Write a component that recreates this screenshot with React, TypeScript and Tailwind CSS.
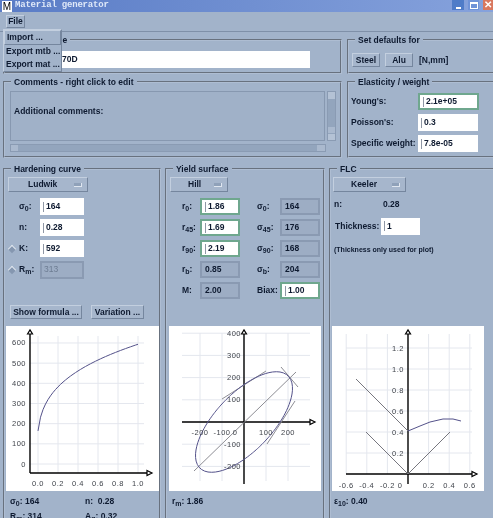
import type { ReactNode } from "react";

const raised = "border border-t-[#c3cfdf] border-l-[#c3cfdf] border-b-[#75869e] border-r-[#75869e]";

function Frame({ title, className, legendClass, children }: { title: string; className: string; legendClass?: string; children: ReactNode }) {
  return (
    <fieldset className={`shrink-0 border-2 [border-style:groove] border-[#aebdd2] ${className}`}>
      <legend className={`px-[3px] text-[8.5px] leading-[12px] ${legendClass ?? "ml-[6px]"}`}>{title}</legend>
      {children}
    </fieldset>
  );
}

function Button({ children, className }: { children: ReactNode; className: string }) {
  return <div className={`flex h-[14px] shrink-0 items-center justify-center whitespace-nowrap bg-[#a6b6cc] text-[8.5px] ${raised} ${className}`}>{children}</div>;
}

function Dropdown({ label, className, textClass }: { label: string; className: string; textClass: string }) {
  return (
    <div className={`flex h-[15px] items-center bg-[#a6b6cc] text-[8.5px] ${raised} ${className}`}>
      <span className={textClass}>{label}</span>
      <span className="ml-auto mr-[5px] h-[4px] w-[8px] border-b border-r border-[#dfe6ef] bg-[#8fa1b9]" />
    </div>
  );
}

// type = white input, green = edited input, off = read only
function Field({ value, type = "white", width = "w-[44px]" }: { value: string; type?: "white" | "green" | "off"; width?: string }) {
  const look =
    type === "white"
      ? "bg-white"
      : type === "green"
        ? "border-2 border-[#6fa78e] bg-white"
        : "border-2 border-[#8a9ab2] bg-[#9dadc4]";
  return (
    <div className={`flex h-[17px] shrink-0 items-center pl-[3px] text-[8.5px] ${width} ${look}`}>
      {type !== "off" && <span className="mr-px h-[10px] w-[2px] shrink-0 border-l border-[#8f97a5]" />}
      {value}
    </div>
  );
}

function Sym({ base, sub }: { base: string; sub: string }) {
  return (
    <span className="whitespace-nowrap">
      {base}
      <sub className="text-[7px] font-bold">{sub}</sub>:
    </span>
  );
}

function Row({ label, labelClass, children, radio }: { label: ReactNode; labelClass: string; children: ReactNode; radio?: boolean }) {
  return (
    <div className="flex h-[17px] items-center">
      <div className={`relative flex shrink-0 items-center ${labelClass}`}>
        {radio && <span className="absolute left-[4px] h-[6px] w-[6px] rotate-45 border-t border-l border-[#e3e9f1] bg-[#8597b0]" />}
        {label}
      </div>
      {children}
    </div>
  );
}

const line = "#e4e7ee";

function Grid({ xs, ys, x0, x1, y0, y1 }: { xs: number[]; ys: number[]; x0: number; x1: number; y0: number; y1: number }) {
  return (
    <g stroke={line} strokeWidth="1">
      {xs.map((x) => <line key={`x${x}`} x1={x} x2={x} y1={y0} y2={y1} />)}
      {ys.map((y) => <line key={`y${y}`} x1={x0} x2={x1} y1={y} y2={y} />)}
    </g>
  );
}

function Axes({ ox, oy, x0, x1, y0, y1 }: { ox: number; oy: number; x0: number; x1: number; y0: number; y1: number }) {
  return (
    <g stroke="#000" fill="none">
      <line x1={x0} x2={x1} y1={oy} y2={oy} strokeWidth="1.4" />
      <line x1={ox} x2={ox} y1={y0} y2={y1} strokeWidth="1.4" />
      <path d={`M${ox - 2.5} ${y0 + 1}L${ox} ${y0 - 3}L${ox + 2.5} ${y0 + 1}Z`} strokeWidth="1.2" fill="#fff" />
      <path d={`M${x1} ${oy - 2.5}L${x1 + 5} ${oy}L${x1} ${oy + 2.5}Z`} strokeWidth="1.2" fill="#fff" />
    </g>
  );
}

function Label({ x, y, children, end }: { x: number; y: number; children: string; end?: boolean }) {
  return (
    <text x={x} y={y} textAnchor={end ? "end" : "middle"} fontSize="7.5" fontWeight="400" letterSpacing="0.5" fill="#3f434a" fontFamily="Liberation Sans, sans-serif">
      {children}
    </text>
  );
}

function HardeningPlot() {
  const pts = Array.from({ length: 41 }, (_, i) => {
    const e = i / 40;
    const s = 592 * Math.pow(0.0102 + e, 0.28);
    return `${32 + e * 100},${138 - s * 0.2017}`;
  }).join(" ");
  const ticksX = [0, 0.2, 0.4, 0.6, 0.8, 1];
  const ticksY = [0, 100, 200, 300, 400, 500, 600];
  return (
    <svg width="153" height="165" className="block bg-white">
      <Grid xs={ticksX.map((v) => 32 + v * 100)} ys={ticksY.map((v) => 138 - v * 0.2017)} x0={24} x1={138} y0={10} y1={147} />
      <Axes ox={24} oy={147} x0={24} x1={141} y0={7} y1={147} />
      <polyline points={pts} fill="none" stroke="#54528a" strokeWidth="1" />
      {ticksX.map((v) => <Label key={v} x={32 + v * 100} y={160}>{v.toFixed(1)}</Label>)}
      {ticksY.map((v) => <Label key={v} x={20} y={140.5 - v * 0.2017} end>{String(v)}</Label>)}
    </svg>
  );
}

function YieldPlot() {
  const ox = 75;
  const oy = 96;
  const pts = Array.from({ length: 121 }, (_, i) => {
    const t = (i / 120) * Math.PI * 2;
    const c = Math.cos(t);
    const n = Math.sin(t);
    const r = 164 / Math.sqrt(c * c - 1.3007 * c * n + 0.9473 * n * n);
    return `${ox + r * c * 0.22},${oy - r * n * 0.222}`;
  }).join(" ");
  const ticksX = [-200, -100, 100, 200];
  const ticksY = [-200, -100, 100, 200, 300, 400];
  return (
    <svg width="152" height="165" className="block bg-white">
      <Grid xs={[...ticksX, 0].map((v) => ox + v * 0.22)} ys={[...ticksY, 0].map((v) => oy - v * 0.222)} x0={13} x1={141} y0={7} y1={155} />
      <Axes ox={ox} oy={oy} x0={13} x1={141} y0={7} y1={158} />
      <line x1={25} y1={145} x2={127} y2={46} stroke="#8d8d94" />
      <g stroke="#8d8d94" fill="none">
        <line x1={98} y1={118} x2={126} y2={75} />
        <line x1={53} y1={73} x2={97} y2={45} />
        <line x1={112} y1={41} x2={129} y2={61} />
      </g>
      <polyline points={pts} fill="none" stroke="#54528a" strokeWidth="1" />
      {ticksX.map((v) => <Label key={v} x={ox + v * 0.22} y={109}>{String(v)}</Label>)}
      <Label x={66} y={109}>0</Label>
      {ticksY.map((v) => <Label key={v} x={72} y={oy + 2.5 - v * 0.222} end>{String(v)}</Label>)}
    </svg>
  );
}

function FlcPlot() {
  const ox = 76;
  const oy = 148;
  const ticksX = [-0.6, -0.4, -0.2, 0.2, 0.4, 0.6];
  const ticksY = [0.2, 0.4, 0.6, 0.8, 1, 1.2];
  const toX = (v: number) => ox + v * 103;
  const toY = (v: number) => oy - v * 105;
  return (
    <svg width="152" height="165" className="block bg-white">
      <Grid xs={ticksX.map(toX)} ys={ticksY.map(toY)} x0={14} x1={140} y0={8} y1={148} />
      <Axes ox={ox} oy={oy} x0={14} x1={140} y0={7} y1={158} />
      <polyline points="24,53 76,105" fill="none" stroke="#77777f" />
      <polyline points="34,106 76,148 118,106" fill="none" stroke="#77777f" />
      <polyline points="76,105 88,100 98,96 111,93 121,93 129,95" fill="none" stroke="#54528a" />
      {ticksX.map((v) => <Label key={v} x={toX(v)} y={162}>{v.toFixed(1)}</Label>)}
      <Label x={68} y={162}>0</Label>
      {ticksY.map((v) => <Label key={v} x={72} y={toY(v) + 2.5} end>{v.toFixed(1)}</Label>)}
    </svg>
  );
}

export default function App() {
  const left = "w-[33px] pl-[15px]";
  const right = "w-[40px] pl-[17px]";
  return (
    <div className="relative h-[518px] w-[493px] overflow-hidden bg-[#a2b3ca] font-['Liberation_Sans',sans-serif] font-bold text-[#0e1a30] blur-[0.3px]">
      {/* Title bar */}
      <div className="flex h-[12px] items-center bg-gradient-to-r from-[#5a7cc6] to-[#86a2dc]">
        <div className="ml-[2px] flex h-[11px] w-[10px] items-center justify-center bg-white text-[10px] font-normal text-black">M</div>
        <span className="ml-[3px] font-['Liberation_Mono'] text-[9px] tracking-[-0.2px] text-[#dfe8f8]">Material generator</span>
        <div className="ml-auto flex h-full items-start gap-[4px]">
          <div className="flex h-[10px] w-[12px] items-end justify-center bg-[#4f7cc8] pb-px">
            <span className="h-[2px] w-[5px] bg-white" />
          </div>
          <div className="flex h-[10px] w-[11px] items-center justify-center bg-[#6f93d8]">
            <span className="h-[7px] w-[8px] border border-t-2 border-white" />
          </div>
          <div className="flex h-[10px] w-[10px] items-center justify-center bg-[#d9785f] text-[10px] leading-none text-white">✕</div>
        </div>
      </div>

      {/* Menu bar */}
      <div className="flex h-[20px] items-center border-b border-[#7f90a8] pl-[6px]">
        <div className={`flex h-[13px] w-[19px] items-center justify-center text-[8.5px] ${raised}`}>File</div>
      </div>

      {/* File menu */}
      <div className={`absolute left-[3px] top-[29px] z-10 flex w-[59px] flex-col whitespace-nowrap bg-[#a2b3ca] text-[8.5px] leading-[13px] ${raised}`}>
        <div className={`pl-[2px] ${raised}`}>Import ...</div>
        <div className="pl-[2px]">Export mtb ...</div>
        <div className="pl-[2px]">Export mat ...</div>
      </div>

      <div className="flex flex-col gap-[2px] pl-[3px] pt-[2px]">
        <div className="flex gap-[5px]">
          <Frame title="Name" className="h-[40px] w-[339px]" legendClass="ml-[36px]">
            <div className="ml-[5px] mr-[30px] mt-[5px] flex h-[17px] items-center bg-white pl-[52px] text-[8.5px]">70D</div>
          </Frame>
          <Frame title="Set defaults for" className="h-[40px] w-[160px]">
            <div className="mt-[7px] flex items-center gap-[5px] pl-[3px]">
              <Button className="w-[28px]">Steel</Button>
              <Button className="w-[28px]">Alu</Button>
              <span className="ml-[1px] text-[8.5px]">[N,mm]</span>
            </div>
          </Frame>
        </div>

        <div className="flex gap-[5px]">
          <Frame title="Comments - right click to edit" className="h-[82px] w-[339px]">
            <div className="flex h-[53px] gap-[2px] pl-[5px] pt-[3px]">
              <div className="w-[315px] border border-[#8798b0] bg-[#a0b1c8] pl-[3px] pt-[13px] text-[8.5px]">Additional comments:</div>
              <div className="flex w-[9px] flex-col border border-[#8a9bb3] bg-[#93a5bd]">
                <span className="h-[7px] bg-[#b4c2d5]" />
                <span className="mt-auto h-[6px] bg-[#aab9ce]" />
                <span className="mt-px h-[6px] bg-[#b4c2d5]" />
              </div>
            </div>
            <div className="ml-[5px] mt-[3px] flex h-[8px] w-[316px] justify-between border border-[#8a9bb3] bg-[#93a5bd]">
              <span className="h-full w-[7px] bg-[#aab9ce]" />
              <span className="h-full w-[8px] bg-[#aab9ce]" />
            </div>
          </Frame>
          <Frame title="Elasticity / weight" className="h-[82px] w-[160px]">
            <div className="mt-[5px] flex flex-col gap-[4px] pl-[2px] text-[8.5px]">
              <Row label="Young's:" labelClass="w-[67px]"><Field value="2.1e+05" type="green" width="w-[61px]" /></Row>
              <Row label="Poisson's:" labelClass="w-[67px]"><Field value="0.3" width="w-[60px]" /></Row>
              <Row label="Specific weight:" labelClass="w-[67px] whitespace-nowrap"><Field value="7.8e-05" width="w-[60px]" /></Row>
            </div>
          </Frame>
        </div>

        <div className="mt-[3px] flex gap-[4px]">
          <Frame title="Hardening curve" className="h-[370px] w-[158px]">
            <Dropdown label="Ludwik" className="ml-[3px] mt-[2px] w-[80px]" textClass="ml-[19px]" />
            <div className="mt-[6px] flex flex-col gap-[4px] text-[8.5px]">
              <Row label={<Sym base="σ" sub="0" />} labelClass="w-[35px] pl-[14px]"><Field value="164" /></Row>
              <Row label="n:" labelClass="w-[35px] pl-[14px]"><Field value="0.28" /></Row>
              <Row label="K:" labelClass="w-[35px] pl-[14px]" radio><Field value="592" /></Row>
              <Row label={<Sym base="R" sub="m" />} labelClass="w-[35px] pl-[14px]" radio>
                <div className="flex h-[18px] w-[44px] items-center border-2 border-[#8a9ab2] bg-[#9dadc4] pl-[2px] font-normal text-[#6d7c92]">313</div>
              </Row>
            </div>
            <div className="ml-[5px] mt-[27px] flex gap-[9px]">
              <Button className="w-[72px]">Show formula ...</Button>
              <Button className="w-[53px]">Variation ...</Button>
            </div>
            <div className="ml-px mt-[7px]"><HardeningPlot /></div>
            <div className="mt-[3px] grid grid-cols-[75px_1fr] pl-[5px] text-[8.5px] leading-[15px]">
              <span><Sym base="σ" sub="0" /> 164</span>
              <span>n: &nbsp;0.28</span>
              <span><Sym base="R" sub="m" /> 314</span>
              <span><Sym base="A" sub="g" /> 0.32</span>
            </div>
          </Frame>

          <Frame title="Yield surface" className="h-[370px] w-[160px]">
            <Dropdown label="Hill" className="ml-[3px] mt-[2px] w-[58px]" textClass="ml-[17px]" />
            <div className="mt-[6px] flex flex-col gap-[4px] text-[8.5px]">
              <div className="flex">
                <Row label={<Sym base="r" sub="0" />} labelClass={left}><Field value="1.86" type="green" width="w-[40px]" /></Row>
                <Row label={<Sym base="σ" sub="0" />} labelClass={right}><Field value="164" type="off" width="w-[40px]" /></Row>
              </div>
              <div className="flex">
                <Row label={<Sym base="r" sub="45" />} labelClass={left}><Field value="1.69" type="green" width="w-[40px]" /></Row>
                <Row label={<Sym base="σ" sub="45" />} labelClass={right}><Field value="176" type="off" width="w-[40px]" /></Row>
              </div>
              <div className="flex">
                <Row label={<Sym base="r" sub="90" />} labelClass={left}><Field value="2.19" type="green" width="w-[40px]" /></Row>
                <Row label={<Sym base="σ" sub="90" />} labelClass={right}><Field value="168" type="off" width="w-[40px]" /></Row>
              </div>
              <div className="flex">
                <Row label={<Sym base="r" sub="b" />} labelClass={left}><Field value="0.85" type="off" width="w-[40px]" /></Row>
                <Row label={<Sym base="σ" sub="b" />} labelClass={right}><Field value="204" type="off" width="w-[40px]" /></Row>
              </div>
              <div className="flex">
                <Row label="M:" labelClass={left}><Field value="2.00" type="off" width="w-[40px]" /></Row>
                <Row label="Biax:" labelClass={right}><Field value="1.00" type="green" width="w-[40px]" /></Row>
              </div>
            </div>
            <div className="ml-[2px] mt-[27px]"><YieldPlot /></div>
            <div className="mt-[3px] pl-[5px] text-[8.5px] leading-[15px]"><Sym base="r" sub="m" /> 1.86</div>
          </Frame>

          <Frame title="FLC" className="h-[370px] w-[170px]">
            <Dropdown label="Keeler" className="ml-[2px] mt-[2px] w-[73px]" textClass="ml-[17px]" />
            <div className="mt-[6px] flex pl-[3px] text-[8.5px]">
              <span className="w-[49px]">n:</span>
              <span>0.28</span>
            </div>
            <div className="mt-[7px] flex items-center pl-[4px] text-[8.5px]">
              <span className="w-[46px]">Thickness:</span>
              <Field value="1" width="w-[39px]" />
            </div>
            <div className="mt-[10px] pl-[3px] text-[7px]">(Thickness only used for plot)</div>
            <div className="ml-px mt-[71px]"><FlcPlot /></div>
            <div className="mt-[3px] pl-[3px] text-[8.5px] leading-[15px]"><Sym base="ε" sub="10" /> 0.40</div>
          </Frame>
        </div>
      </div>
    </div>
  );
}
